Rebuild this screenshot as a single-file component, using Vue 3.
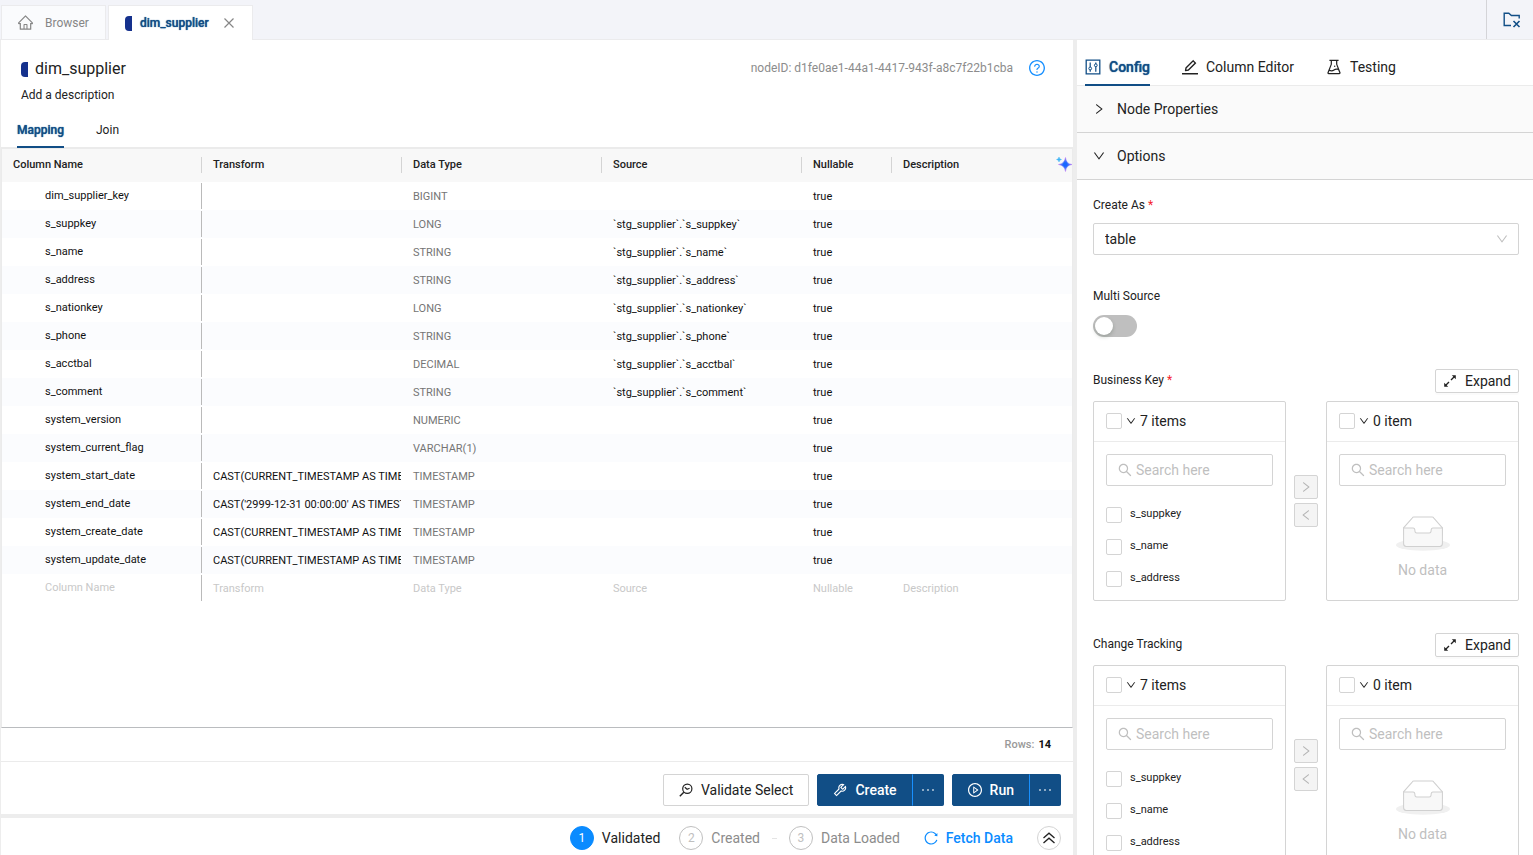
<script setup>
import { ref, h } from 'vue'

const outlines = {
  home: ['M946.5 505L534.6 93.4a31.93 31.93 0 00-45.2 0L77.5 505c-12 12-18.8 28.3-18.8 45.3 0 35.3 28.7 64 64 64h43.4V908c0 17.7 14.3 32 32 32h627.800c17.7 0 32-14.3 32-32V614.3h43.4c17 0 33.3-6.7 45.3-18.8 24.9-25 24.9-65.5-.1-90.5zM568 868H456V664h112v204zm217.9-325.7V868H632V640c0-22.1-17.9-40-40-40H432c-22.1 0-40 17.9-40 40v228H238.1V542.3h-96l370-369.7 369.900 369.700h-96.1z'],
  right: ['M765.7 486.8L314.9 134.7A7.97 7.97 0 00302 141v77.3c0 4.9 2.3 9.6 6.1 12.6l360 281.1-360 281.1c-3.9 3-6.1 7.7-6.1 12.6V883c0 6.7 7.7 10.4 12.9 6.3l450.8-352.1a31.96 31.96 0 000-50.4z'],
  left: ['M724 218.3V141c0-6.7-7.7-10.4-12.9-6.3L260.3 486.8a31.86 31.86 0 000 50.3l450.8 352.1c5.3 4.1 12.9.4 12.9-6.3v-77.3c0-4.9-2.3-9.6-6.1-12.6l-360-281 360-281.1c3.8-3 6.1-7.7 6.1-12.6z'],
  down: ['M884 256h-75c-5.1 0-9.9 2.5-12.9 6.6L512 654.2 227.9 262.6c-3-4.1-7.8-6.6-12.9-6.6h-75c-6.5 0-10.3 7.4-6.5 12.7l352.6 486.1c12.8 17.6 39 17.6 51.7 0l352.6-486.1c3.9-5.3.1-12.7-6.4-12.7z'],
  search: ['M909.6 854.5L649.9 594.8C690.2 542.7 712 479 712 412c0-80.2-31.3-155.4-87.9-212.1-56.6-56.7-132-87.9-212.1-87.9s-155.5 31.3-212.1 87.9C143.2 256.5 112 331.8 112 412c0 80.1 31.3 155.5 87.9 212.1C256.5 680.8 331.8 712 412 712c67 0 130.6-21.8 182.7-62l259.7 259.6a8.2 8.2 0 0011.6 0l43.6-43.5a8.2 8.2 0 000-11.6zM570.4 570.4C528 612.7 471.8 636 412 636s-116-23.3-158.4-65.6C211.3 528 188 471.8 188 412s23.3-116.1 65.6-158.4C296 211.3 352.2 188 412 188s116.1 23.2 158.4 65.6S636 352.2 636 412s-23.3 116.1-65.6 158.4z'],
  ellipsis: ['M176 511a56 56 0 10112 0 56 56 0 10-112 0zm280 0a56 56 0 10112 0 56 56 0 10-112 0zm280 0a56 56 0 10112 0 56 56 0 10-112 0z'],
  play: ['M512 64C264.6 64 64 264.6 64 512s200.6 448 448 448 448-200.6 448-448S759.4 64 512 64zm0 820c-205.4 0-372-166.6-372-372s166.6-372 372-372 372 166.6 372 372-166.6 372-372 372z', 'M719.4 499.1l-296.1-215A15.9 15.9 0 00398 297v430c0 13.1 14.8 20.5 25.3 12.9l296.1-215a15.9 15.9 0 000-25.8zm-257.6 134V390.9L628.5 512 461.8 633.1z'],
  question: ['M512 64C264.6 64 64 264.6 64 512s200.6 448 448 448 448-200.6 448-448S759.4 64 512 64zm0 820c-205.4 0-372-166.6-372-372s166.6-372 372-372 372 166.6 372 372-166.6 372-372 372z', 'M623.6 316.7C593.6 290.4 554 276 512 276s-81.6 14.5-111.6 40.7C369.2 344 352 380.7 352 420v7.6c0 4.4 3.6 8 8 8h48c4.4 0 8-3.6 8-8V420c0-44.1 43.1-80 96-80s96 35.9 96 80c0 31.1-22 59.6-56.1 72.7-21.2 8.1-39.2 22.3-52.1 40.9-13.1 19-19.9 41.8-19.9 64.9V620c0 4.4 3.6 8 8 8h48c4.4 0 8-3.6 8-8v-22.7a48.3 48.3 0 0130.9-44.8c59-22.7 97.1-74.7 97.1-132.5.1-39.3-17.1-76-48.3-103.3zM472 732a40 40 0 1080 0 40 40 0 10-80 0z'],
  reload: ['M909.1 209.3l-56.4 44.1C775.8 155.1 656.2 92 521.9 92 290 92 102.3 279.5 102 511.5 101.7 743.7 289.8 932 521.9 932c181.3 0 335.8-115 394.6-276.1 1.5-4.2-.7-8.9-4.9-10.3l-56.7-19.5a8 8 0 00-10.1 4.8c-1.8 5-3.8 10-5.9 14.9-17.3 41-42.1 77.8-73.7 109.4A344.77 344.77 0 01655.9 829c-42.3 17.9-87.4 27-133.8 27-46.5 0-91.5-9.1-133.8-27A341.5 341.5 0 01279 755.2a342.16 342.16 0 01-73.7-109.4c-17.9-42.4-27-87.4-27-133.9s9.1-91.5 27-133.9c17.3-41 42.1-77.8 73.7-109.4 31.6-31.6 68.4-56.4 109.3-73.8 42.3-17.9 87.4-27 133.8-27 46.5 0 91.5 9.1 133.8 27a341.5 341.5 0 01109.3 73.8c9.9 9.9 19.2 20.4 27.8 31.4l-60.2 47a8 8 0 003 14.1l175.6 43c5 1.2 9.9-2.6 9.9-7.7l.8-180.9c-.1-6.6-7.8-10.3-13-6.2z'],
  edit: ['M257.7 752c2 0 4-.2 6-.5L431.9 722c2-.4 3.9-1.3 5.3-2.8l423.9-423.9a9.96 9.96 0 000-14.1L694.9 114.9c-1.9-1.9-4.4-2.9-7.1-2.9s-5.2 1-7.1 2.9L256.8 538.8c-1.5 1.5-2.4 3.3-2.8 5.3l-29.5 168.2a33.5 33.5 0 009.4 29.8c6.6 6.4 14.9 9.9 23.8 9.9zm67.4-174.4L687.8 215l73.3 73.3-362.7 362.6-88.9 15.7 15.6-89zM952 852H72c-4.4 0-8 3.6-8 8v60c0 4.4 3.6 8 8 8h880c4.4 0 8-3.6 8-8v-60c0-4.4-3.6-8-8-8z'],
  tool: ['M876.6 239.5c-.5-.9-1.2-1.8-2-2.5-5-5-13.1-5-18.1 0L684.2 409.3l-67.9-67.9L788.7 169c.8-.8 1.4-1.6 2-2.5 3.6-6.1 1.6-13.9-4.5-17.5-98.2-58-226.8-44.7-311.3 39.7-67 67-89.2 162-66.5 247.4l-293 293c-3 3-2.8 7.9.3 11l169.7 169.7c3.1 3.1 8.1 3.3 11 .3l292.9-292.9c85.5 22.8 180.5.7 247.6-66.4 84.4-84.5 97.7-213.1 39.7-311.3zM786 499.8c-58.1 58.1-145.3 69.3-214.6 33.6l-8.8 8.8-.1-.1-274 274.1-79.2-79.2 230.1-230.1s0 .1.1.1l52.8-52.8c-35.7-69.3-24.5-156.5 33.6-214.6a184.2 184.2 0 01144-53.5L537 318.9a32.05 32.05 0 000 45.3l124.5 124.5a32.05 32.05 0 0045.3 0l132.8-132.8c3.7 51.8-14.4 104.8-53.6 143.9z'],
  flask: ['M512 472a40 40 0 1080 0 40 40 0 10-80 0zm367 352.9L696.3 352V178H768v-68H256v68h71.7v174L145 824.9c-2.8 7.4-4.3 15.2-4.3 23.1 0 35.3 28.7 64 64 64h614.6c7.9 0 15.7-1.5 23.1-4.3 33-12.7 49.4-49.8 36.6-82.8zM395.7 364.7V180h232.6v184.7L719.2 600c-20.7-5.3-42.1-8-63.9-8-61.2 0-119.2 21.5-165.3 60a188.78 188.78 0 01-121.3 43.9c-32.7 0-64.1-8.3-91.8-23.7l118.8-307.5zM210.5 844l41.7-107.8c35.7 18.1 75.4 27.8 116.6 27.8 61.2 0 119.2-21.5 165.3-60 33.9-28.2 76.3-43.9 121.3-43.9 35 0 68.4 9.5 97.6 27.1L813.5 844h-603z'],
}

const Icon = (props) =>
  h('svg', { viewBox: '64 64 896 896', width: props.size, height: props.size, fill: 'currentColor', 'aria-hidden': 'true' },
    outlines[props.name].map((d) => h('path', { d })))
Icon.props = ['name', 'size']

const headers = ['Column Name', 'Transform', 'Data Type', 'Source', 'Nullable']
const now = 'CAST(CURRENT_TIMESTAMP AS TIMESTAMP)'
const rows = [
  ['dim_supplier_key', '', 'BIGINT', ''],
  ['s_suppkey', '', 'LONG', '`stg_supplier`.`s_suppkey`'],
  ['s_name', '', 'STRING', '`stg_supplier`.`s_name`'],
  ['s_address', '', 'STRING', '`stg_supplier`.`s_address`'],
  ['s_nationkey', '', 'LONG', '`stg_supplier`.`s_nationkey`'],
  ['s_phone', '', 'STRING', '`stg_supplier`.`s_phone`'],
  ['s_acctbal', '', 'DECIMAL', '`stg_supplier`.`s_acctbal`'],
  ['s_comment', '', 'STRING', '`stg_supplier`.`s_comment`'],
  ['system_version', '', 'NUMERIC', ''],
  ['system_current_flag', '', 'VARCHAR(1)', ''],
  ['system_start_date', now, 'TIMESTAMP', ''],
  ['system_end_date', "CAST('2999-12-31 00:00:00' AS TIMESTAMP)", 'TIMESTAMP', ''],
  ['system_create_date', now, 'TIMESTAMP', ''],
  ['system_update_date', now, 'TIMESTAMP', ''],
]
const transfers = [
  { id: 'bk', label: 'Business Key', required: true },
  { id: 'ct', label: 'Change Tracking', required: false },
]
const items = ['s_suppkey', 's_name', 's_address']
const createAs = ref('table')
const multiSource = ref(false)
</script>

<template>
  <div class="app">
    <header class="topbar">
      <nav class="tabs">
        <button class="tab"><Icon name="home" size="15" /><span>Browser</span></button>
        <div class="tab active">
          <i class="node-mark"></i>
          <button class="tab-name">dim_supplier</button>
          <button class="close" aria-label="Close tab">
            <svg width="10" height="10" viewBox="0 0 10 10" fill="none" stroke="currentColor" stroke-width="1.200"><path d="M.5.5l9 9M9.500.5l-9 9" /></svg>
          </button>
        </div>
      </nav>
      <button class="folder" aria-label="Close folder panel">
        <svg width="18" height="16" viewBox="0 0 18 16" fill="none" stroke="currentColor">
          <path stroke-width="1.400" d="M8 13.500H1.200V1.200h4.600l2.600 2.300h7.800V6.500" />
          <path stroke-width="1.600" d="M10.500 9l6 6M16.500 9l-6 6" />
        </svg>
      </button>
    </header>

    <div class="body">
      <main class="main">
        <section class="editor">
          <div class="heading">
            <div>
              <h1><i class="node-mark"></i>dim_supplier</h1>
              <p>Add a description</p>
            </div>
            <div class="node-id">
              <span>nodeID: d1fe0ae1-44a1-4417-943f-a8c7f22b1cba</span>
              <button aria-label="Help"><Icon name="question" size="16" /></button>
            </div>
          </div>
          <nav class="subtabs">
            <button class="on">Mapping</button>
            <button>Join</button>
          </nav>
          <div class="grid">
            <table>
              <colgroup>
                <col class="wide" /><col class="wide" /><col class="wide" /><col class="wide" /><col class="narrow" /><col />
              </colgroup>
              <thead>
                <tr>
                  <th v-for="t in headers" :key="t" scope="col"><div class="th">{{ t }}</div></th>
                  <th scope="col">
                    <div class="th last">
                      Description
                      <svg width="16" height="16" viewBox="0 0 16 16" aria-hidden="true">
                        <defs>
                          <radialGradient id="spark"><stop offset="0.25" stop-color="#1668ff" /><stop offset="1" stop-color="#c07cf5" /></radialGradient>
                        </defs>
                        <path fill="url(#spark)" d="M9.500 .5Q10 7 16 7.500Q10 8 9.500 14.500Q8.600 8 2.500 7.500Q8.600 7 9.500 .5Z" stroke="url(#spark)" stroke-width=".6" />
                        <path fill="#3cb4f5" stroke="#3cb4f5" stroke-width=".4" d="M3 0Q3.300 2.200 5.500 2.500Q3.300 2.800 3 5Q2.700 2.800 .5 2.500Q2.700 2.200 3 0Z" />
                      </svg>
                    </div>
                  </th>
                </tr>
              </thead>
              <tbody>
                <tr v-for="r in rows" :key="r[0]">
                  <td class="name"><div>{{ r[0] }}</div></td>
                  <td><div class="clip">{{ r[1] }}</div></td>
                  <td class="muted">{{ r[2] }}</td>
                  <td>{{ r[3] }}</td>
                  <td>true</td>
                  <td></td>
                </tr>
                <tr class="blank">
                  <td class="name"><div>Column Name</div></td>
                  <td>Transform</td>
                  <td>Data Type</td>
                  <td>Source</td>
                  <td>Nullable</td>
                  <td>Description</td>
                </tr>
              </tbody>
            </table>
          </div>
          <div class="count">Rows: <b>14</b></div>
          <div class="actions">
            <button class="btn">
              <svg width="14" height="14" viewBox="0 0 14 14" fill="none" stroke="currentColor" aria-hidden="true">
                <circle cx="8.300" cy="5.700" r="4.600" stroke-width="1.200" />
                <path stroke-width="1.400" d="M4.800 9.200L.8 13.200" />
                <path stroke-width="1.200" d="M5.800 4.200l2.300 2 2.500-1" />
              </svg>
              Validate Select
            </button>
            <div class="split">
              <button class="btn primary"><Icon name="tool" size="14" />Create</button>
              <button class="btn primary more" aria-label="More create actions"><Icon name="ellipsis" size="16" /></button>
            </div>
            <div class="split">
              <button class="btn primary"><Icon name="play" size="14" />Run</button>
              <button class="btn primary more" aria-label="More run actions"><Icon name="ellipsis" size="16" /></button>
            </div>
          </div>
        </section>
        <footer class="status">
          <ol>
            <li class="current"><i>1</i>Validated</li>
            <li><i>2</i>Created</li>
            <li class="dash" aria-hidden="true"></li>
            <li><i>3</i>Data Loaded</li>
          </ol>
          <button class="fetch"><Icon name="reload" size="14" />Fetch Data</button>
          <button class="up" aria-label="Expand panel">
            <svg width="14" height="14" viewBox="0 0 14 14" fill="none" stroke="currentColor" stroke-width="1.300"><path d="M1.500 7L7 2.200 12.500 7M1.500 12L7 7.200l5.500 4.800" /></svg>
          </button>
        </footer>
      </main>

      <aside class="side">
        <nav class="side-tabs">
          <button class="on">
            <svg width="16" height="16" viewBox="0 0 16 16" fill="none" stroke="currentColor" aria-hidden="true">
              <path stroke-width="1.300" d="M1.200 1.200h13.600v13.600H1.200z" />
              <path d="M5.200 3.500v4.500M5.200 10.800v2M10.800 3.500v1.500M10.800 7.800v5" stroke-width="1.200" />
              <circle cx="5.200" cy="9.500" r="1.400" /><circle cx="10.800" cy="6.300" r="1.400" />
            </svg>
            Config
          </button>
          <button><Icon name="edit" size="16" />Column Editor</button>
          <button><Icon name="flask" size="16" />Testing</button>
        </nav>
        <button class="fold"><Icon name="right" size="12" />Node Properties</button>
        <button class="fold"><Icon name="down" size="12" />Options</button>
        <form class="options" @submit.prevent>
          <label class="caption" for="create-as">Create As <em>*</em></label>
          <div class="select">
            <select id="create-as" v-model="createAs"><option>table</option></select>
            <Icon name="down" size="12" />
          </div>
          <label class="caption" for="multi">Multi Source</label>
          <input id="multi" v-model="multiSource" class="switch" type="checkbox" role="switch" />

          <section v-for="t in transfers" :key="t.id" class="transfer">
            <div class="transfer-top">
              <h2 class="caption">{{ t.label }} <em v-if="t.required">*</em></h2>
              <button type="button" class="expand">
                <svg width="14" height="14" viewBox="0 0 14 14" fill="currentColor" aria-hidden="true">
                  <path d="M12.800 1.200v4L8.800 1.200zM1.200 12.800v-4l4 4z" />
                  <path fill="none" stroke="currentColor" stroke-width="1.400" d="M11.500 2.500L8 6M6 8L2.500 11.500" />
                </svg>
                Expand
              </button>
            </div>
            <div class="panes">
              <div class="pane">
                <div class="pane-head"><input type="checkbox" :aria-label="'Select all ' + t.label" /><Icon name="down" size="10" /><span>7 items</span></div>
                <label class="search"><Icon name="search" size="14" /><input type="text" placeholder="Search here" :aria-label="'Search ' + t.label" /></label>
                <ul>
                  <li v-for="i in items" :key="i"><label><input type="checkbox" /><span>{{ i }}</span></label></li>
                </ul>
              </div>
              <div class="moves">
                <button type="button" disabled aria-label="Move right"><Icon name="right" size="12" /></button>
                <button type="button" disabled aria-label="Move left"><Icon name="left" size="12" /></button>
              </div>
              <div class="pane">
                <div class="pane-head"><input type="checkbox" :aria-label="'Select all chosen ' + t.label" /><Icon name="down" size="10" /><span>0 item</span></div>
                <label class="search"><Icon name="search" size="14" /><input type="text" placeholder="Search here" :aria-label="'Search chosen ' + t.label" /></label>
                <div class="empty">
                  <svg width="54" height="35" viewBox="0 0 64 41" aria-hidden="true">
                    <ellipse cx="32" cy="34" rx="32" ry="7" fill="#f0f0f0" />
                    <g stroke="#d0d0d0" stroke-width="1.200" fill="#fff">
                      <path d="M55 13.760L44.854 2.258C44.367 1.474 43.656 1 42.907 1H21.093c-.749 0-1.460.474-1.947 1.257L9 13.761V22h46v-8.240z" />
                      <path fill="#f8f8f8" d="M41.613 16.931c0-1.605.994-2.930 2.227-2.931H55v18.137C55 34.260 53.680 36 52.050 36h-40.100C10.320 36 9 34.259 9 32.137V14h11.160c1.233 0 2.227 1.323 2.227 2.928v.022c0 1.605 1.005 2.901 2.237 2.901h14.752c1.232 0 2.237-1.308 2.237-2.913v-.007z" />
                    </g>
                  </svg>
                  <span>No data</span>
                </div>
              </div>
            </div>
          </section>
        </form>
      </aside>
    </div>
  </div>
</template>

<style>
body { overflow: hidden; }
</style>

<style scoped>
.app, .app * { box-sizing: border-box; }
.app {
  --blue: #114e86;
  display: flex;
  flex-direction: column;
  height: 100vh;
  font: 14px/22px Roboto, sans-serif;
  color: #222;
  background: #fff;
}
button { font: inherit; color: inherit; background: none; border: 0; padding: 0; display: flex; align-items: center; }
svg { display: block; flex: none; }
i { font-style: normal; }

.topbar { display: flex; justify-content: space-between; height: 40px; background: #f3f4f9; border-bottom: 1px solid #ebebed; flex: none; }
.tabs { display: flex; align-items: flex-end; gap: 2px; padding-left: 1px; }
.tab { display: flex; align-items: center; height: 34px; padding: 0 16px; border: 1px solid #ebebed; border-bottom: 0; background: #fafbfd; color: #868686; font-size: 12px; }
.tab > span { padding-left: 12px; }
.tab.active { height: 35px; margin-bottom: -1px; padding-right: 18px; background: #fff; color: var(--blue); }
.tab-name { padding: 0 15px 0 8px; }
.tab-name, .subtabs .on, .side-tabs .on { color: var(--blue); font-weight: 500; text-shadow: 0 0 1px currentColor; }
.close { color: #868686; }
.node-mark { width: 7px; height: 15px; background: #15318d; border-radius: 4px 0 0 4px; }
.folder { width: 47px; padding-left: 3px; justify-content: center; color: var(--blue); border-left: 1px solid #d4d4d8; }

.body { flex: 1; min-height: 0; display: flex; background: #ededed; gap: 4px; }
.main { flex: 1; min-width: 0; display: flex; flex-direction: column; gap: 4px; padding-left: 1px; }
.editor { flex: 1; min-height: 0; display: flex; flex-direction: column; background: #fff; }
.heading { display: flex; justify-content: space-between; padding: 18px 28px 0 20px; }
h1 { display: flex; align-items: center; gap: 7px; margin: 0; font-size: 16px; line-height: 22px; font-weight: 400; }
p { margin: 4px 0 0; font-size: 12px; line-height: 22px; }
.node-id { display: flex; align-items: center; gap: 16px; height: 20px; font-size: 12px; color: #8c8c8c; }
.node-id button { color: #1890ff; }
.subtabs { display: flex; gap: 32px; padding: 0 16px; margin-top: 7px; border-bottom: 2px solid #ebebeb; font-size: 12px; }
.subtabs button { height: 35px; margin-bottom: -1px; border-bottom: 2px solid transparent; }
.subtabs .on, .side-tabs .on { border-color: var(--blue); }

.grid { flex: 1; min-height: 0; overflow: hidden; border: solid #ebebeb; border-width: 0 1px; border-bottom: 1px solid #babcbf; }
table { width: 100%; table-layout: fixed; border-spacing: 0; font-size: 11px; color: #111; }
.wide { width: 200px; }
.narrow { width: 90px; }
th { height: 33px; padding: 8px 0 0; background: #f8f8f8; text-align: left; vertical-align: top; font-weight: 500; color: #222; }
.th { display: flex; align-items: center; height: 16px; padding-left: 11px; border-right: 1px solid #d4d4d4; line-height: 16px; }
.th.last { border: 0; justify-content: space-between; }
td { height: 28px; padding: 2px 0 0 11px; white-space: nowrap; line-height: 16px; }
tbody tr:nth-child(even) { background: #fbfcfe; }
.clip { margin-right: 1px; overflow: hidden; }
.name { padding: 0; }
.name div { height: 26px; line-height: 26px; padding-left: 43px; border-right: 1px solid #bababa; }
.muted { color: #757575; }
.blank td { color: #c8c8c8; }
.count { display: flex; justify-content: flex-end; align-items: center; gap: 4px; height: 34px; padding-right: 22px; border-bottom: 1px solid #ebebeb; font-size: 11px; font-weight: 500; color: #999; }
.count b { color: #111; }
.actions { display: flex; justify-content: flex-end; gap: 8px; padding: 12px 12px 8px; }
.btn { gap: 8px; height: 32px; padding: 0 15px; border: 1px solid #d4d4d4; border-radius: 2px; }
.primary { background: var(--blue); border-color: var(--blue); color: #fff; font-weight: 500; border-radius: 2px 0 0 2px; }
.more { width: 32px; margin-left: -1px; padding: 0; justify-content: center; border-left-color: #1890ff; border-radius: 0 2px 2px 0; }
.more svg { opacity: .7; }
.split { display: flex; }

.status { display: flex; align-items: center; justify-content: flex-end; height: 37px; padding: 3px 12px 0 0; background: #fff; }
ol { display: flex; align-items: center; gap: 19px; margin: 0; padding: 0; list-style: none; color: #8c8c8c; }
li { display: flex; align-items: center; }
ol i { width: 24px; height: 24px; margin-right: 8px; border: 1px solid #bfbfbf; border-radius: 50%; font-size: 12px; text-align: center; color: #bfbfbf; }
ol .current { color: #222; }
.current i { background: #0a8bff; border-color: #0a8bff; color: #fff; }
.dash { width: 5px; height: 1px; margin: 0 -7px; background: #e4e4e4; }
.fetch { gap: 8px; margin: 0 24px; color: #0a8bff; font-weight: 500; }
.up { width: 24px; height: 24px; justify-content: center; border: 1px solid #d4d4d4; border-radius: 50%; }

.side { width: 456px; flex: none; background: #fff; overflow: hidden; }
.side-tabs { display: flex; gap: 32px; height: 46px; padding: 0 8px; border-bottom: 1px solid #ebebeb; }
.side-tabs button { gap: 8px; padding-top: 9px; margin-bottom: -1px; border-bottom: 2px solid transparent; }
.side-tabs .on { border-color: var(--blue); }
.fold { width: 100%; height: 47px; gap: 12px; padding-left: 16px; background: #fafafa; border-bottom: 1px solid #d4d4d4; }
.options { padding: 14px 14px 0 16px; }
.caption { display: block; margin: 0; font-size: 12px; line-height: 22px; font-weight: 400; }
em { color: #f5222d; font-style: normal; }
.select { display: grid; align-items: center; margin: 7px 0 30px; }
.select > * { grid-area: 1 / 1; }
.select svg { justify-self: end; margin-right: 11px; color: #bfbfbf; pointer-events: none; }
select { appearance: none; width: 100%; height: 32px; padding: 0 11px; font: inherit; color: inherit; background: #fff; border: 1px solid #d4d4d4; border-radius: 2px; }
.switch { appearance: none; display: flex; width: 44px; height: 22px; margin: 8px 0 32px; padding: 2px; border-radius: 11px; background: #bfbfbf; }
.switch::before { content: ''; width: 18px; height: 18px; border-radius: 50%; background: #fff; box-shadow: 0 2px 4px rgba(0, 35, 11, .2); }
.switch:checked { background: var(--blue); justify-content: flex-end; }
.transfer { margin-bottom: 32px; }
.transfer-top { display: flex; justify-content: space-between; height: 24px; margin-bottom: 8px; }
.expand { gap: 8px; height: 24px; padding: 0 7px; border: 1px solid #d4d4d4; border-radius: 2px; box-shadow: 0 2px 0 rgba(0, 0, 0, .015); }
.panes { display: grid; grid-template-columns: 1fr 24px 1fr; gap: 8px; }
.pane { height: 200px; border: 1px solid #d4d4d4; border-radius: 2px; overflow: hidden; }
.pane-head { display: flex; align-items: center; gap: 4px; height: 40px; padding: 0 12px 1px; border-bottom: 1px solid #ebebeb; }
.pane [type='checkbox'] { appearance: none; width: 16px; height: 16px; margin: 0; border: 1px solid #d4d4d4; border-radius: 2px; background: #fff; flex: none; }
.pane [type='checkbox']:checked { background: var(--blue); }
.search { display: flex; align-items: center; gap: 4px; height: 32px; margin: 12px; padding: 0 11px; border: 1px solid #d4d4d4; border-radius: 2px; color: #bfbfbf; }
.search input { flex: 1; min-width: 0; padding: 0; border: 0; outline: 0; font: inherit; color: #222; background: none; }
.search input::placeholder { color: #bfbfbf; opacity: 1; }
ul { margin: 0; padding: 1px 12px 0; list-style: none; font-size: 11px; }
li label { display: flex; align-items: center; gap: 8px; height: 32px; }
li label span { padding-bottom: 2px; }
.moves { display: flex; flex-direction: column; justify-content: center; gap: 4px; }
.moves button { width: 24px; height: 24px; justify-content: center; border: 1px solid #d4d4d4; border-radius: 2px; background: #f4f4f4; color: #b4b4b4; }
.empty { display: flex; flex-direction: column; align-items: center; gap: 8px; padding-top: 18px; color: #bfbfbf; }
</style>
